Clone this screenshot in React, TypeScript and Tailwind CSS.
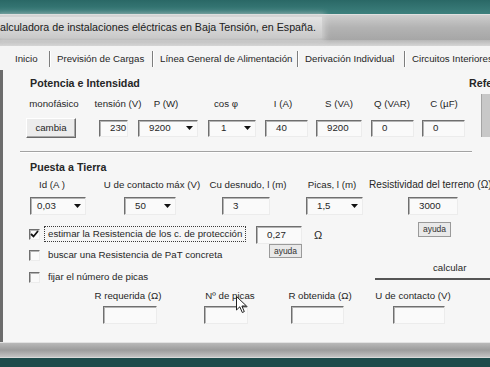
import React from 'react';

const sunken =
  'shrink-0 flex items-center bg-[#fafafa] border-t border-l border-t-[#6f6f6f] border-l-[#6f6f6f] border-b border-r border-b-[#ececec] border-r-[#ececec] shadow-[inset_1px_1px_0_#b4b4b4]';

function TextBox({ className = '', value = '' }: { className?: string; value?: string }) {
    return <div className={`${sunken} pl-[10px] ${className}`}>{value}</div>;
}

function Combo({ className = '', value }: { className?: string; value: string }) {
    return (
        <div className={`${sunken} justify-between pr-[3px] ${className}`}>
            <span>{value}</span>
            <span className="w-[10px] h-[12px] flex items-center justify-center">
                <svg width="7" height="4" viewBox="0 0 7 4">
                    <polygon points="0,0 7,0 3.5,4" fill="#111" />
                </svg>
            </span>
        </div>
    );
}

function Check({ checked = false }: { checked?: boolean }) {
    return (
        <div className={`${sunken} w-[11px] h-[11px] justify-center`}>
            {checked && (
                <svg width="9" height="8" viewBox="0 0 9 8">
                    <path d="M1 4 L3.5 6.5 L8 1" stroke="#111" strokeWidth="1.8" fill="none" />
                </svg>
            )}
        </div>
    );
}

function Ayuda({ className = '' }: { className?: string }) {
    return (
        <div
            className={`shrink-0 flex items-center justify-center border border-[#9a9a9a] bg-[#e9e9e9] text-[8.5px] text-[#333] ${className}`}
        >
            ayuda
        </div>
    );
}

function TabSep() {
    return <div className="w-[1px] h-[16px] bg-[#7d7d7d] border-r border-white box-content shrink-0" />;
}

export default function App() {
    return (
        <div className="w-[490px] h-[367px] overflow-hidden relative bg-[#1e4b4b] font-['Liberation_Sans',Arial,sans-serif] text-[9.7px] text-[#262626]">
            {/* desktop strip */}
            <div className="h-[14px] bg-linear-to-b from-[#2a6866] to-[#3d807d]" />

            {/* title bar */}
            <div className="h-[26px] bg-linear-to-b from-[#cdcdcd] via-[#b3b3b3] to-[#a6a6a6] border-t border-[#e0e0e0] flex items-center">
                <div className="h-[21px] w-[322px] flex items-center bg-linear-to-b from-[#e4e4e4] to-[#c9c9c9] shadow-[0_0_6px_3px_rgba(220,220,220,0.7)] text-[10.7px] text-[#202020] whitespace-nowrap">
                    alculadora de instalaciones eléctricas en Baja Tensión, en España.
                </div>
            </div>
            <div className="h-[8px] bg-linear-to-b from-[#b7b7b7] to-[#d6d6d6] border-b-2 border-[#f4f4f4]" />

            {/* tabs */}
            <div className="h-[22px] bg-[#f4f4f4] flex items-center pl-[15px] whitespace-nowrap">
                <div className="w-[34px] shrink-0">Inicio</div>
                <TabSep />
                <div className="w-[101px] pl-[6px] shrink-0">Previsión de Cargas</div>
                <TabSep />
                <div className="w-[143px] pl-[6px] shrink-0">Línea General de Alimentación</div>
                <TabSep />
                <div className="w-[105px] pl-[6px] shrink-0">Derivación Individual</div>
                <TabSep />
                <div className="pl-[6px] shrink-0">Circuitos Interiores</div>
            </div>

            {/* content */}
            <div className="h-[272px] bg-[#f6f6f6] shadow-[inset_3px_0_0_#6c6c6c] flex flex-col whitespace-nowrap">
                <div className="mt-[6px] h-[14px] flex items-center font-bold text-[10.7px]">
                    <div className="w-[469px] pl-[30px] shrink-0">Potencia e Intensidad</div>
                    <div className="shrink-0">Referencias</div>
                </div>

                <div className="flex">
                    <div className="w-[472px] shrink-0 flex flex-col">
                        <div className="mt-[8px] h-[12px] flex items-center pl-[20px] text-center">
                            <div className="w-[68px] shrink-0">monofásico</div>
                            <div className="ml-[5px] w-[50px] shrink-0">tensión (V)</div>
                            <div className="ml-[3px] w-[40px] shrink-0">P (W)</div>
                            <div className="ml-[20px] w-[40px] shrink-0">cos φ</div>
                            <div className="ml-[17px] w-[40px] shrink-0">I (A)</div>
                            <div className="ml-[16px] w-[40px] shrink-0">S (VA)</div>
                            <div className="ml-[8px] w-[50px] shrink-0">Q (VAR)</div>
                            <div className="ml-[2px] w-[50px] shrink-0">C (µF)</div>
                        </div>
                        <div className="mt-[8px] h-[20px] flex items-center pl-[26px]">
                            <div className="w-[50px] h-[20px] shrink-0 flex items-center justify-center bg-[#ececec] border border-t-white border-l-white border-b-[#6a6a6a] border-r-[#6a6a6a] shadow-[inset_-1px_-1px_0_#a8a8a8]">
                                cambia
                            </div>
                            <TextBox className="ml-[23px] w-[29px] h-[17px]" value="230" />
                            <Combo className="ml-[10px] w-[60px] h-[17px] pl-[10px]" value="9200" />
                            <Combo className="ml-[10px] w-[48px] h-[17px] pl-[12px]" value="1" />
                            <TextBox className="ml-[9px] w-[43px] h-[17px]" value="40" />
                            <TextBox className="ml-[8px] w-[46px] h-[17px]" value="9200" />
                            <TextBox className="ml-[9px] w-[43px] h-[17px]" value="0" />
                            <TextBox className="ml-[8px] w-[43px] h-[17px]" value="0" />
                        </div>
                    </div>
                    <div className="ml-[9px] mt-[4px] w-[9px] h-[43px] shrink-0 bg-[#c8c8c8] border-l border-[#a5a5a5]" />
                </div>

                <div className="mt-[13px] ml-[20px] w-[452px] h-[2px] border-t border-[#a3a3a3] border-b border-b-white" />

                <div className="mt-[7px] h-[14px] flex items-center pl-[30px] font-bold text-[10.7px]">Puesta a Tierra</div>

                <div className="mt-[5px] h-[12px] flex items-center pl-[27px] text-center">
                    <div className="w-[50px] shrink-0">Id (A )</div>
                    <div className="ml-[23px] w-[104px] shrink-0">U de contacto máx (V)</div>
                    <div className="ml-[2px] w-[84px] shrink-0">Cu desnudo, l (m)</div>
                    <div className="ml-[12px] w-[60px] shrink-0">Picas, l (m)</div>
                    <div className="ml-[7px] shrink-0 text-left text-[10.1px]">Resistividad del terreno (Ω)</div>
                </div>

                <div className="mt-[6px] h-[18px] flex items-center pl-[30px]">
                    <Combo className="w-[56px] h-[18px] pl-[6px]" value="0,03" />
                    <Combo className="ml-[38px] w-[52px] h-[18px] pl-[10px]" value="50" />
                    <TextBox className="ml-[46px] w-[48px] h-[18px]" value="3" />
                    <Combo className="ml-[36px] w-[57px] h-[18px] pl-[10px]" value="1,5" />
                    <TextBox className="ml-[45px] w-[50px] h-[18px]" value="3000" />
                </div>

                <div className="mt-[7px] flex items-start">
                    <div className="ml-[29px] w-[227px] shrink-0 pt-[4px] flex flex-col">
                        <div className="h-[16px] flex items-center">
                            <Check checked />
                            <div className="ml-[4px] h-[16px] px-[3px] flex items-center border border-dotted border-[#3a3a3a]">
                                estimar la Resistencia de los c. de protección
                            </div>
                        </div>
                        <div className="mt-[5px] h-[16px] flex items-center">
                            <Check />
                            <div className="ml-[8px]">buscar una Resistencia de PaT concreta</div>
                        </div>
                        <div className="mt-[6px] h-[16px] flex items-center">
                            <Check />
                            <div className="ml-[8px]">fijar el número de picas</div>
                        </div>
                    </div>
                    <div className="w-[119px] shrink-0 pt-[4px] flex flex-col">
                        <div className="h-[18px] flex items-center">
                            <TextBox className="w-[46px] h-[18px]" value="0,27" />
                            <div className="ml-[12px] text-[11px]">Ω</div>
                        </div>
                        <Ayuda className="ml-[13px] w-[33px] h-[14px]" />
                    </div>
                    <div className="w-[115px] shrink-0 flex flex-col">
                        <Ayuda className="ml-[43px] w-[33px] h-[15px]" />
                        <div className="mt-[21px] h-[22px] flex items-center pl-[58px] border-b-2 border-[#555]">calcular</div>
                    </div>
                </div>

                <div className="mt-[5px] h-[12px] flex items-center pl-[88px] text-center">
                    <div className="w-[80px] shrink-0">R requerida (Ω)</div>
                    <div className="ml-[22px] w-[80px] shrink-0">Nº de picas</div>
                    <div className="ml-[10px] w-[80px] shrink-0">R obtenida (Ω)</div>
                    <div className="ml-[8px] w-[90px] shrink-0">U de contacto (V)</div>
                </div>

                <div className="mt-[4px] h-[18px] flex items-center">
                    <TextBox className="ml-[103px] w-[54px] h-[18px]" />
                    <TextBox className="ml-[47px] w-[44px] h-[18px]" />
                    <TextBox className="ml-[43px] w-[53px] h-[18px]" />
                    <TextBox className="ml-[49px] w-[52px] h-[18px]" />
                </div>
            </div>

            {/* bottom frame */}
            <div className="h-[16px] bg-linear-to-b from-[#b9b9b9] via-[#9c9c9c] to-[#c2c2c2] border-t border-[#e2e2e2] border-b border-b-[#d8d8d8]" />

            {/* mouse pointer */}
            <svg className="absolute left-[236px] top-[296px]" width="12" height="18" viewBox="0 0 12 18">
                <path d="M0.5 0.5 L0.5 14 L3.8 10.8 L6.3 16.5 L8.3 15.6 L5.9 10 L10.5 10 Z" fill="#fff" stroke="#222" strokeWidth="1" />
            </svg>
        </div>
    );
}
